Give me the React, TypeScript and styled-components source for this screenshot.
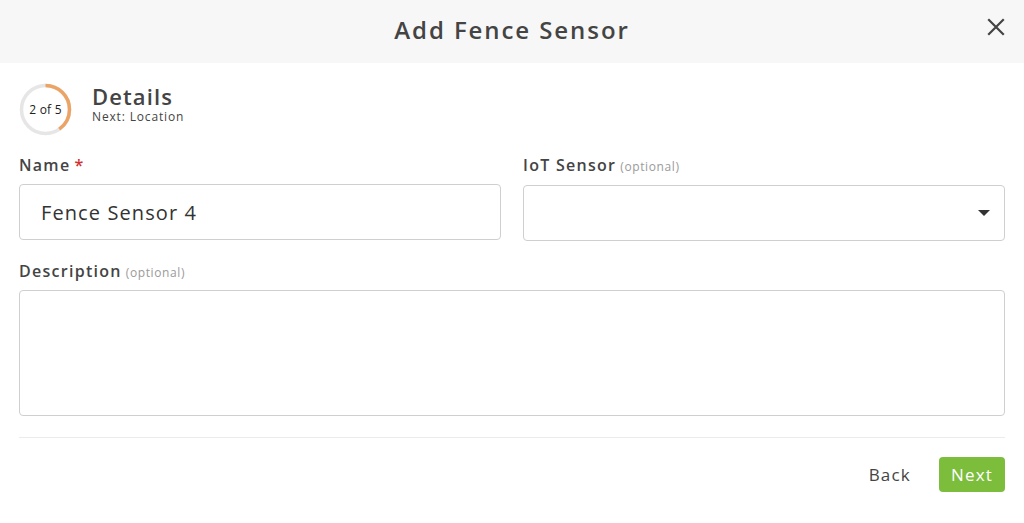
import styled, { createGlobalStyle } from 'styled-components';

const Global = createGlobalStyle`
  html, body { margin: 0; padding: 0; background: #fff; }
  body {
    font-family: "Open Sans", "Liberation Sans", sans-serif;
    color: #444;
    letter-spacing: 0.06em;
  }
  * { box-sizing: border-box; }
`;

const Modal = styled.div`
  width: 1024px;
  height: 523px;
  display: flex;
  flex-direction: column;
`;

const Header = styled.header`
  height: 63px;
  background: #f7f7f7;
  display: flex;
  align-items: center;
  justify-content: center;
  position: relative;
`;

const Title = styled.h1`
  margin: -4px 0 0;
  font-size: 24px;
  font-weight: 600;
  color: #444;
  letter-spacing: 0.08em;
`;

const Close = styled.button`
  position: absolute;
  right: 18px;
  top: 17px;
  width: 20px;
  height: 20px;
  padding: 0;
  border: none;
  background: none;
  cursor: pointer;
`;

const Body = styled.div`
  padding: 20px 19px 0;
  display: flex;
  flex-direction: column;
`;

const Step = styled.div`
  display: flex;
  align-items: center;
  gap: 20px;
  height: 53px;
`;

const Ring = styled.div`
  position: relative;
  width: 53px;
  height: 53px;
  display: flex;
  align-items: center;
  justify-content: center;
  svg { position: absolute; inset: 0; }
`;

const RingLabel = styled.span`
  font-size: 12px;
  font-weight: 500;
  color: #222;
  letter-spacing: 0.02em;
  position: relative;
`;

const StepText = styled.div`
  display: flex;
  flex-direction: column;
  gap: 3px;
  margin-top: -10px;
`;

const StepTitle = styled.div`
  font-size: 22px;
  font-weight: 600;
  color: #444;
  line-height: 22px;
  letter-spacing: 0.05em;
`;

const StepNext = styled.div`
  font-size: 12px;
  color: #444;
  line-height: 14px;
  letter-spacing: 0.07em;
`;

const Row = styled.div`
  display: grid;
  grid-template-columns: 1fr 1fr;
  gap: 22px;
  margin-top: 19px;
`;

const Field = styled.div<{ $top?: number }>`
  display: flex;
  flex-direction: column;
  margin-top: ${p => p.$top ?? 0}px;
`;

const Label = styled.label`
  font-size: 16px;
  font-weight: 600;
  color: #444;
  line-height: 20px;
  height: 20px;
  margin-bottom: 9px;
  letter-spacing: 0.08em;
`;

const Optional = styled.span`
  font-size: 12px;
  font-weight: 400;
  color: #9a9a9a;
  margin-left: 4px;
  line-height: 1;
  letter-spacing: 0.05em;
`;

const Req = styled.span`
  color: #d32f2f;
  margin-left: 4px;
`;

const Input = styled.input`
  height: 56px;
  border: 1px solid #cfcfcf;
  border-radius: 4px;
  padding: 0 21px;
  font-family: inherit;
  font-size: 20px;
  letter-spacing: 0.055em;
  color: #333;
  outline: none;
`;

const Select = styled.div`
  height: 56px;
  border: 1px solid #cfcfcf;
  border-radius: 4px;
  display: flex;
  align-items: center;
  justify-content: flex-end;
  padding-right: 14px;
  margin-top: 1px;
`;

const Caret = styled.span`
  width: 0;
  height: 0;
  border-left: 6px solid transparent;
  border-right: 6px solid transparent;
  border-top: 6px solid #333;
`;

const TextArea = styled.textarea`
  height: 126px;
  border: 1px solid #cfcfcf;
  border-radius: 4px;
  resize: none;
  font-family: inherit;
  outline: none;
`;

const Divider = styled.hr`
  border: none;
  border-top: 1px solid #ebebeb;
  margin: 21px 0 0;
`;

const Footer = styled.div`
  display: flex;
  justify-content: flex-end;
  align-items: center;
  gap: 10px;
  margin-top: 19px;
`;

const Button = styled.button<{ $primary?: boolean }>`
  height: 35px;
  border: none;
  border-radius: 4px;
  font-family: inherit;
  font-size: 17px;
  letter-spacing: 0.07em;
  cursor: pointer;
  background: ${p => (p.$primary ? '#7cbd3c' : 'transparent')};
  color: ${p => (p.$primary ? '#fff' : '#444')};
  padding: ${p => (p.$primary ? '0 12px' : '0 18px')};
`;

const r = 24;
const c = 2 * Math.PI * r;

export default function App() {
  return (
    <>
      <Global />
      <Modal>
        <Header>
          <Title>Add Fence Sensor</Title>
          <Close aria-label="close">
            <svg width="20" height="20" viewBox="0 0 20 20">
              <path d="M3 3 L17 17 M17 3 L3 17" stroke="#444" strokeWidth="2.2" strokeLinecap="square" />
            </svg>
          </Close>
        </Header>
        <Body>
          <Step>
            <Ring>
              <svg width="53" height="53" viewBox="0 0 53 53">
                <circle cx="26.5" cy="26.5" r={r} fill="none" stroke="#e6e6e6" strokeWidth="3.5" />
                <circle
                  cx="26.5"
                  cy="26.5"
                  r={r}
                  fill="none"
                  stroke="#eba466"
                  strokeWidth="3.5"
                  strokeDasharray={`${c * 0.4} ${c}`}
                  transform="rotate(-90 26.5 26.5)"
                />
              </svg>
              <RingLabel>2 of 5</RingLabel>
            </Ring>
            <StepText>
              <StepTitle>Details</StepTitle>
              <StepNext>Next: Location</StepNext>
            </StepText>
          </Step>
          <Row>
            <Field>
              <Label>Name<Req>*</Req></Label>
              <Input defaultValue="Fence Sensor 4" />
            </Field>
            <Field>
              <Label>IoT Sensor<Optional>(optional)</Optional></Label>
              <Select><Caret /></Select>
            </Field>
          </Row>
          <Field $top={20}>
            <Label>Description<Optional>(optional)</Optional></Label>
            <TextArea />
          </Field>
          <Divider />
          <Footer>
            <Button>Back</Button>
            <Button $primary>Next</Button>
          </Footer>
        </Body>
      </Modal>
    </>
  );
}
